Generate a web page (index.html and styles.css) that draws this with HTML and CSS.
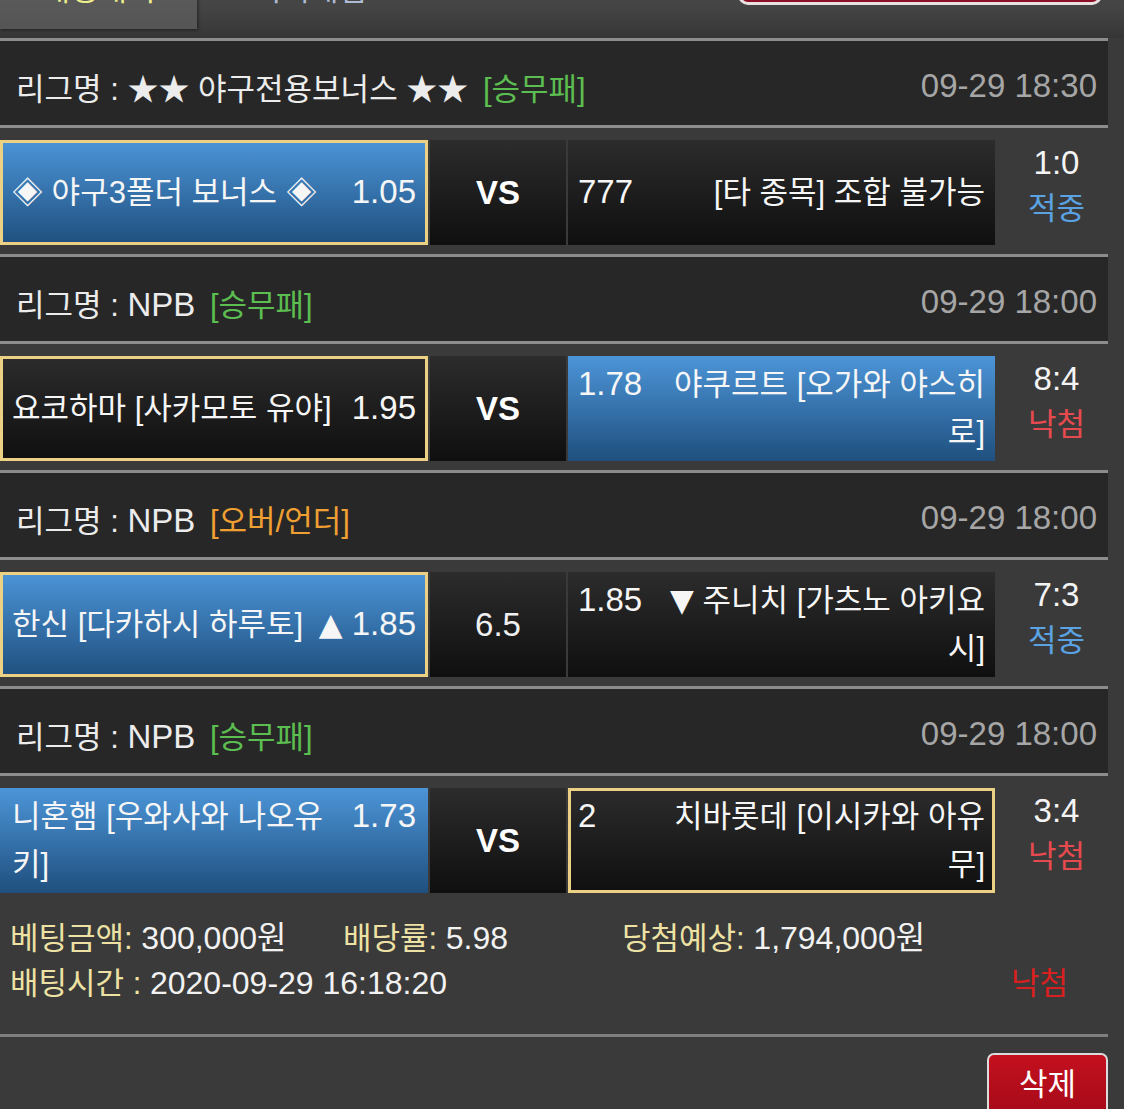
FILE: index.html
```html
<!DOCTYPE html>
<html lang="ko">
<head>
<meta charset="utf-8">
<title>배팅내역</title>
<link rel="stylesheet" href="styles.css">
</head>
<body>
<div class="page">
  <div class="tabs">
    <div class="tab tab-active">배팅내역</div>
    <div class="tab tab-plain">미니게임</div>
    <div class="top-btn"></div>
  </div>

  <div class="list">
    <div class="block">
      <div class="league">
        <div class="league-name">리그명 : ★★ 야구전용보너스 ★★ <span class="tag tag-green">[승무패]</span></div>
        <div class="time">09-29 18:30</div>
      </div>
      <div class="match">
        <div class="cell cell-blue cell-pick">
          <div class="inner"><span class="name">◈ 야구3폴더 보너스 ◈</span><span class="odds">1.05</span></div>
        </div>
        <div class="cell cell-dark cell-mid"><span class="vs">VS</span></div>
        <div class="cell cell-dark">
          <div class="inner"><span class="odds">777</span><span class="name name-right">[타 종목] 조합 불가능</span></div>
        </div>
        <div class="score"><div class="score-num">1:0</div><div class="res res-win">적중</div></div>
      </div>
    </div>

    <div class="block">
      <div class="league">
        <div class="league-name">리그명 : <span class="latin">NPB</span> <span class="tag tag-green">[승무패]</span></div>
        <div class="time">09-29 18:00</div>
      </div>
      <div class="match">
        <div class="cell cell-dark cell-pick">
          <div class="inner"><span class="name">요코하마 [사카모토 유야]</span><span class="odds">1.95</span></div>
        </div>
        <div class="cell cell-dark cell-mid"><span class="vs">VS</span></div>
        <div class="cell cell-blue">
          <div class="inner"><span class="odds">1.78</span><span class="name name-right">야쿠르트 [오가와 야스히<br>로]</span></div>
        </div>
        <div class="score"><div class="score-num">8:4</div><div class="res res-lose">낙첨</div></div>
      </div>
    </div>

    <div class="block">
      <div class="league">
        <div class="league-name">리그명 : <span class="latin">NPB</span> <span class="tag tag-orange">[오버/언더]</span></div>
        <div class="time">09-29 18:00</div>
      </div>
      <div class="match">
        <div class="cell cell-blue cell-pick">
          <div class="inner"><span class="name">한신 [다카하시 하루토]</span><span class="odds"><span class="tri">▲</span> 1.85</span></div>
        </div>
        <div class="cell cell-dark cell-mid"><span class="line-val">6.5</span></div>
        <div class="cell cell-dark">
          <div class="inner"><span class="odds">1.85</span><span class="name name-right"><span class="tri">▼</span> 주니치 [가츠노 아키요<br>시]</span></div>
        </div>
        <div class="score"><div class="score-num">7:3</div><div class="res res-win">적중</div></div>
      </div>
    </div>

    <div class="block">
      <div class="league">
        <div class="league-name">리그명 : <span class="latin">NPB</span> <span class="tag tag-green">[승무패]</span></div>
        <div class="time">09-29 18:00</div>
      </div>
      <div class="match">
        <div class="cell cell-blue">
          <div class="inner"><span class="name">니혼햄 [우와사와 나오유<br>키]</span><span class="odds">1.73</span></div>
        </div>
        <div class="cell cell-dark cell-mid"><span class="vs">VS</span></div>
        <div class="cell cell-dark cell-pick">
          <div class="inner"><span class="odds">2</span><span class="name name-right">치바롯데 [이시카와 아유<br>무]</span></div>
        </div>
        <div class="score"><div class="score-num">3:4</div><div class="res res-lose">낙첨</div></div>
      </div>
    </div>

    <div class="summary">
      <div class="sum-line">
        <span class="sum-item sum-a"><span class="lbl">베팅금액:</span> <span class="val">300,000원</span></span>
        <span class="sum-item sum-b"><span class="lbl">배당률:</span> <span class="val">5.98</span></span>
        <span class="sum-item"><span class="lbl">당첨예상:</span> <span class="val">1,794,000원</span></span>
      </div>
      <div class="sum-line sum-line2">
        <span class="sum-item"><span class="lbl">배팅시간 :</span> <span class="val">2020-09-29 16:18:20</span></span>
        <span class="final-lose">낙첨</span>
      </div>
    </div>
    <div class="divider"></div>
    <div class="actions">
      <button class="del-btn" type="button">삭제</button>
    </div>
  </div>
</div>
</body>
</html>
```

FILE: styles.css
```css
html, body {
  margin: 0;
  padding: 0;
}
body {
  background: #3a3a3a;
  font-family: "Liberation Sans", "Noto Sans CJK KR", sans-serif;
  font-size: 31px;
  color: #f2f2f2;
  overflow: hidden;
}
.page {
  width: 1124px;
  height: 1109px;
  overflow: hidden;
}

/* top tabs (cropped by the screenshot edge) */
.tabs {
  display: flex;
  align-items: flex-start;
  height: 67px;
  margin-top: -29px;
  background: linear-gradient(#4a4a4a 0%, #444 55%, #3b3b3b 85%, #353535 100%);
}
.tab {
  height: 58px;
  box-sizing: border-box;
  padding-top: 4px;
  line-height: 30px;
  font-size: 31px;
}
.tab-active {
  width: 197px;
  text-align: center;
  color: #eff08c;
  background: linear-gradient(#5e5e5e, #555);
  box-shadow: 1px 1px 3px rgba(0,0,0,0.45);
}
.tab-plain {
  margin-left: 56px;
  color: #aebbd4;
}
.top-btn {
  margin-left: auto;
  margin-right: 22px;
  width: 364px;
  height: 34px;
  box-sizing: border-box;
  background: #8d0e27;
  border: 3px solid #e9e2e2;
  border-top: none;
  border-radius: 0 0 10px 10px;
}

.list {
  width: 1108px;
}

.block {
  border-top: 3px solid #8c8c8c;
}
.league {
  height: 87px;
  box-sizing: border-box;
  display: flex;
  align-items: center;
  justify-content: space-between;
  padding: 6px 11px 0 16px;
  background: #272727;
  border-bottom: 3px solid #8c8c8c;
  color: #ececec;
}
.latin {
  font-size: 33px;
}
.tag {
  margin-left: 6px;
}
.tag-green { color: #5cbd50; }
.tag-orange { color: #f0a033; }
.time {
  font-size: 33px;
  color: #a6a6a6;
}

.match {
  display: flex;
  height: 126px;
  box-sizing: border-box;
  padding: 12px 0 9px;
}
.cell {
  display: flex;
  align-items: center;
  box-sizing: border-box;
  height: 105px;
  padding: 0 12px;
  line-height: 48px;
  color: #f6f6f6;
}
.cell:nth-child(1) { width: 428px; }
.cell-mid {
  width: 136px;
  margin-left: 2px;
  justify-content: center;
}
.cell:nth-child(3) {
  width: 427px;
  margin-left: 2px;
  padding: 0 10px;
}
.cell-dark {
  background: linear-gradient(#2c2c2c, #0f0f0f);
}
.cell-blue {
  background: linear-gradient(#4c95d8, #1f4f7e);
}
.cell-pick {
  box-shadow: inset 0 0 0 3px #ecd084;
}
.inner {
  display: flex;
  align-items: baseline;
  justify-content: space-between;
  width: 100%;
  white-space: nowrap;
}
.odds {
  font-size: 33px;
}
.tri {
  font-family: "DejaVu Sans", sans-serif;
  font-size: 31px;
}
.name-right {
  flex: 1;
  text-align: right;
}
.vs {
  font-size: 33px;
  font-weight: bold;
  color: #fff;
}
.line-val {
  font-size: 33px;
  color: #f0f0f0;
}

.score {
  flex: 1;
  text-align: center;
  line-height: 46px;
  padding-left: 10px;
}
.score-num {
  font-size: 33px;
  color: #f4f4f4;
}
.res-win { color: #5aa2e2; }
.res-lose { color: #e64a4f; }

.summary {
  padding: 14px 0 28px 10px;
  line-height: 45px;
}
.sum-line {
  display: flex;
  align-items: baseline;
}
.sum-a { width: 333px; }
.sum-b { width: 279px; }
.lbl { color: #ede2a3; }
.val { font-size: 32px; color: #f2f2f2; }
.sum-line2 {
  justify-content: space-between;
  padding-right: 40px;
}
.final-lose { color: #d8201f; }

.divider {
  height: 3px;
  background: #7e7e7e;
}
.actions {
  display: flex;
  justify-content: flex-end;
  padding-top: 16px;
}
.del-btn {
  width: 121px;
  height: 64px;
  box-sizing: border-box;
  border: 2px solid #dcdcdc;
  border-radius: 7px;
  background: linear-gradient(#c4101f, #a50a18);
  color: #fff;
  font-family: "Liberation Sans", "Noto Sans CJK KR", sans-serif;
  font-size: 31px;
  padding: 0 0 8px;
}
```
